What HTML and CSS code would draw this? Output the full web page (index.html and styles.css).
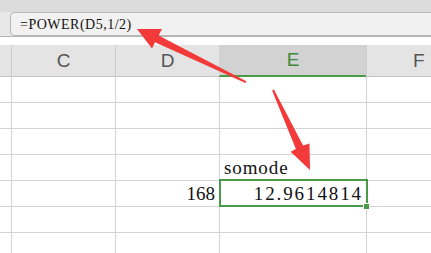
FILE: index.html
```html
<!DOCTYPE html>
<html>
<head>
    <title>Sheet</title>
    <link rel="stylesheet" href="styles.css">
</head>
<body>
    <div class="topbar"></div>

    <div class="formulaBar">
        <div class="formulaBox">=POWER(D5,1/2)</div>
    </div>

    <div class="sheet">
        <div class="colHead stub"></div>
        <div class="colHead">C</div>
        <div class="colHead">D</div>
        <div class="colHead active">E</div>
        <div class="colHead last">F</div>

        <!-- row 1 -->
        <div class="cell stub"></div><div class="cell"></div><div class="cell"></div><div class="cell"></div><div class="cell"></div>
        <!-- row 2 -->
        <div class="cell stub"></div><div class="cell"></div><div class="cell"></div><div class="cell"></div><div class="cell"></div>
        <!-- row 3 -->
        <div class="cell stub"></div><div class="cell"></div><div class="cell"></div><div class="cell"></div><div class="cell"></div>
        <!-- row 4 -->
        <div class="cell stub"></div><div class="cell"></div><div class="cell"></div><div class="cell text">somode</div><div class="cell"></div>
        <!-- row 5 -->
        <div class="cell stub"></div><div class="cell"></div><div class="cell num">168</div><div class="cell num selected">12.9614814<span class="handle"></span></div><div class="cell"></div>
        <!-- row 6 -->
        <div class="cell stub"></div><div class="cell"></div><div class="cell"></div><div class="cell"></div><div class="cell"></div>
        <!-- row 7 -->
        <div class="cell stub"></div><div class="cell"></div><div class="cell"></div><div class="cell"></div><div class="cell"></div>
    </div>

    <svg class="arrows" viewBox="0 0 431 253" width="431" height="253">
        <polygon points="137,29 162,29 158.6,35.4 246.4,81.2 245.4,83 155,42.3 152,48.6" fill="#f23a3a"/>
        <polygon points="310,170 309.5,143.5 303.1,145.6 273.9,89.6 272.1,90.4 295.9,149 290.6,151.8" fill="#f23a3a"/>
    </svg>
</body>
</html>
```

FILE: styles.css
```css
body {
    margin: 0;
    width: 431px;
    height: 253px;
    overflow: hidden;
    background: white;
    position: relative;
}
.topbar {
    height: 13px;
    background: #dcdcdc;
}
.formulaBar {
    height: 24px;
    background: #e8e8e8;
    border-bottom: 1px solid #b4b4b4;
    padding-left: 10px;
}
.formulaBox {
    height: 24px;
    box-sizing: border-box;
    border: 1px solid #b9b9b9;
    border-right: none;
    border-radius: 5px 0 0 5px;
    background: #f1f1f1;
    margin-top: -1px;
    padding-left: 9px;
    font-family: "Liberation Serif", serif;
    font-size: 14px;
    letter-spacing: 0.5px;
    line-height: 23px;
    color: #111;
}
.sheet {
    display: grid;
    grid-template-columns: 11px 104px 104px 147px 65px;
    grid-auto-rows: 26px;
    grid-template-rows: 32px;
    margin-top: 8px;
    overflow: hidden;
    position: relative;
}
.colHead {
    box-sizing: border-box;
    background: #e4e4e4;
    border-left: 1px solid #cdcdcd;
    border-bottom: 1px solid #c6c6c6;
    font-family: "Liberation Sans", sans-serif;
    font-size: 19px;
    color: #555;
    text-align: center;
    line-height: 31px;
}
.colHead.stub {
    border-left: none;
}
.colHead.last {
    text-align: left;
    padding-left: 46px;
}
.colHead.active {
    background: #d2d2d2;
    color: #3a8a3a;
    border-left: 1px solid #d2d2d2;
    border-bottom: 2px solid #4a9a4a;
    line-height: 30px;
}
.cell {
    box-sizing: border-box;
    border-left: 1px solid #d4d4d4;
    border-bottom: 1px solid #d4d4d4;
    font-family: "Liberation Serif", serif;
    font-size: 19px;
    color: #111;
    display: flex;
    align-items: flex-end;
    line-height: 22px;
    padding-bottom: 1px;
}
.cell.stub {
    border-left: none;
}
.cell.text {
    padding-left: 4px;
    letter-spacing: 0.9px;
}
.cell.num {
    justify-content: flex-end;
    padding-right: 4px;
}
.cell.selected {
    position: relative;
    letter-spacing: 1.9px;
    padding-right: 3px;
}
.cell.selected::after {
    content: "";
    position: absolute;
    left: -1px;
    top: -2px;
    right: -2px;
    bottom: -1px;
    border: 2px solid #4a9a4a;
}
.handle {
    position: absolute;
    right: -4px;
    bottom: -4px;
    width: 5px;
    height: 5px;
    background: #4a9a4a;
    border: 1px solid white;
    z-index: 1;
}
.arrows {
    position: absolute;
    left: 0;
    top: 0;
    pointer-events: none;
}
```
